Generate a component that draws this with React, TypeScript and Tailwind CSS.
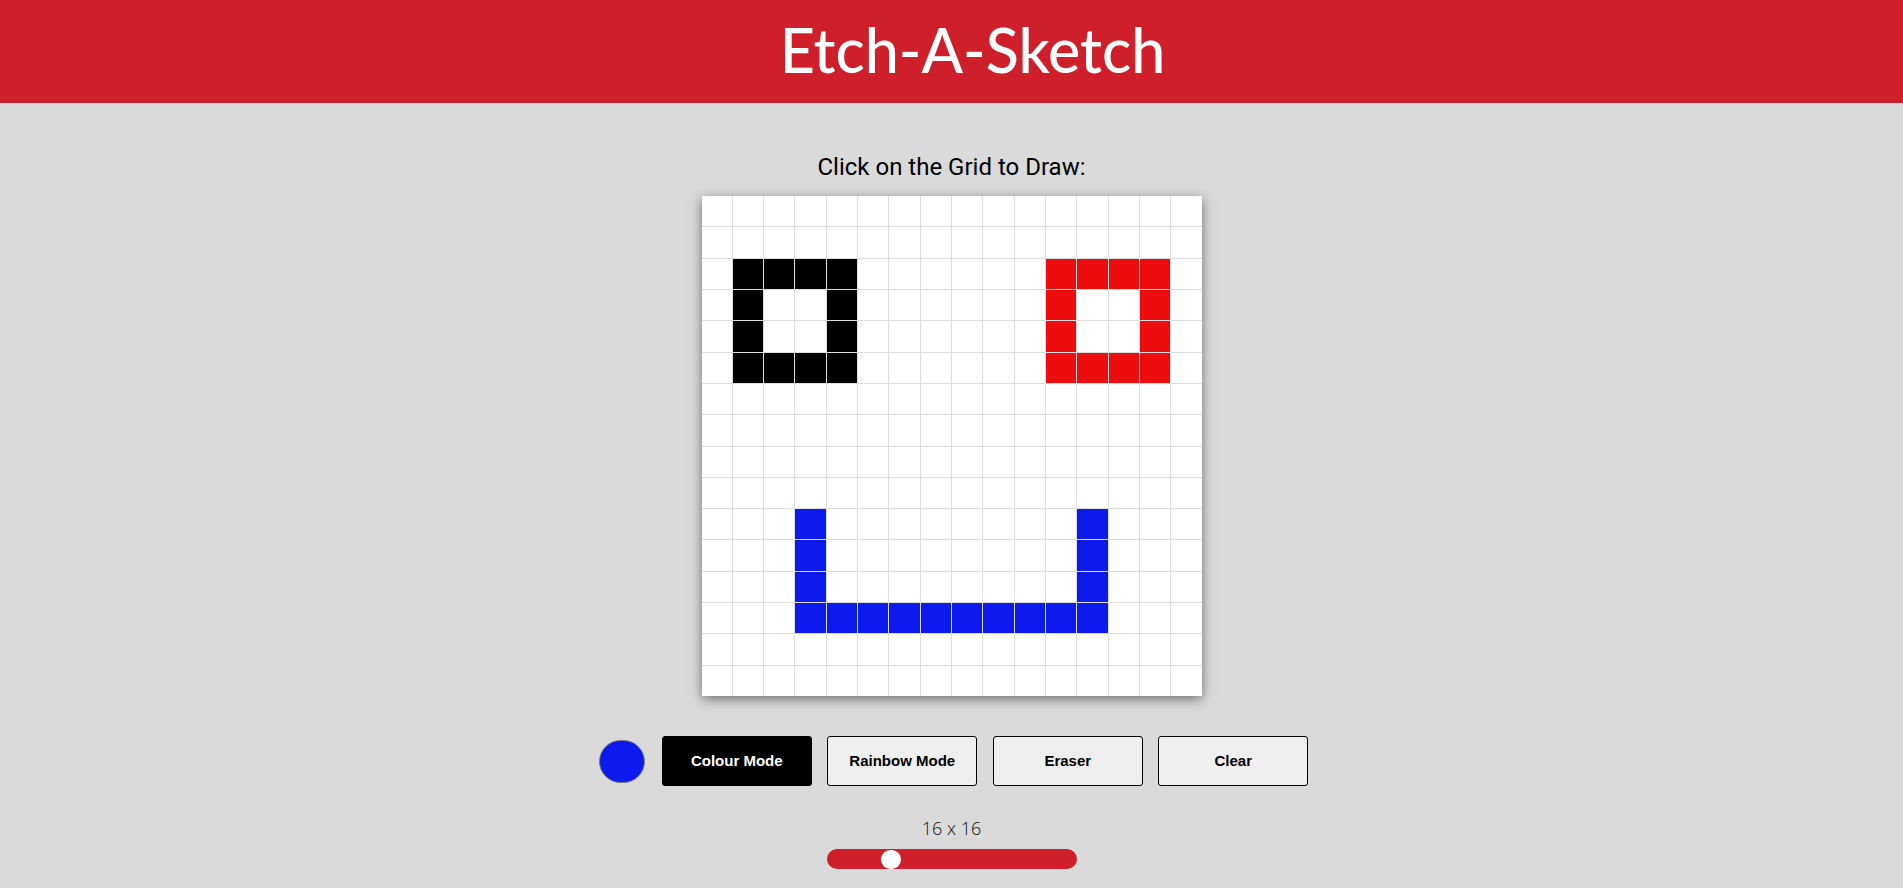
import React from "react";

const BLACK = "#000000";
const RED = "#ee0d0e";
const BLUE = "#0c1aee";

function buildCells(): string[] {
  const cells: string[] = Array(256).fill("#ffffff");
  const set = (r: number, c: number, col: string) => {
    cells[r * 16 + c] = col;
  };
  const ring = (r0: number, c0: number, col: string) => {
    for (let i = 0; i < 4; i++) {
      set(r0, c0 + i, col);
      set(r0 + 3, c0 + i, col);
      set(r0 + i, c0, col);
      set(r0 + i, c0 + 3, col);
    }
  };
  ring(2, 1, BLACK);
  ring(2, 11, RED);
  for (let r = 10; r <= 13; r++) {
    set(r, 3, BLUE);
    set(r, 12, BLUE);
  }
  for (let c = 3; c <= 12; c++) set(13, c, BLUE);
  return cells;
}

export default function App() {
  const cells = buildCells();
  const value = 16;
  const pct = (value - 1) / 63;
  return (
    <div className="min-h-[888px] w-full bg-[#dadada]" style={{ fontFamily: "Roboto, sans-serif" }}>
      <header className="h-[103px] w-full bg-[#ce1f2a] flex items-center justify-center">
        <h1
          className="text-white text-[61px] leading-none pl-[42px] pb-[4px] font-medium"
          style={{ fontFamily: "Lato, sans-serif" }}
        >
          Etch-A-Sketch
        </h1>
      </header>
      <main className="flex flex-col items-center">
        <p className="mt-[50px] text-[24px] leading-[28px] text-black" style={{ fontFamily: "Roboto, sans-serif" }}>
          Click on the Grid to Draw:
        </p>
        <div className="mt-[15px] w-[500px] h-[500px] grid grid-cols-16 grid-rows-16 gap-px bg-[#dddddd] shadow-[0_3px_11px_rgba(0,0,0,0.5)]">
          {cells.map((c, i) => (
            <div key={i} style={{ backgroundColor: c }} />
          ))}
        </div>
        <div
          className="mt-[40px] ml-[4px] flex items-center"
          style={{ fontFamily: "'Liberation Sans', Arial, sans-serif" }}
        >
          <div className="w-[46px] h-[43px] rounded-full bg-[#0c1aee] border border-[#7a7a7a] mr-[17px]" />
          <div className="flex gap-[15.5px]">
            <button className="w-[150px] h-[50px] rounded-[3px] border border-black bg-black text-white font-bold text-[15px]">
              Colour Mode
            </button>
            <button className="w-[150px] h-[50px] rounded-[3px] border border-black bg-[#efefef] text-black font-bold text-[15px]">
              Rainbow Mode
            </button>
            <button className="w-[150px] h-[50px] rounded-[3px] border border-black bg-[#efefef] text-black font-bold text-[15px]">
              Eraser
            </button>
            <button className="w-[150px] h-[50px] rounded-[3px] border border-black bg-[#efefef] text-black font-bold text-[15px]">
              Clear
            </button>
          </div>
        </div>
        <p
          className="mt-[30px] text-[18px] leading-[24px] font-light text-[#111]"
          style={{ fontFamily: "'Open Sans', sans-serif" }}
        >
          16 x 16
        </p>
        <div className="mt-[9px] w-[250px] h-[20px] rounded-full bg-[#ce1f2a] flex items-center">
          <div style={{ width: `${pct * 230}px` }} />
          <div className="w-[20px] h-[19px] rounded-full bg-white" />
        </div>
      </main>
    </div>
  );
}
